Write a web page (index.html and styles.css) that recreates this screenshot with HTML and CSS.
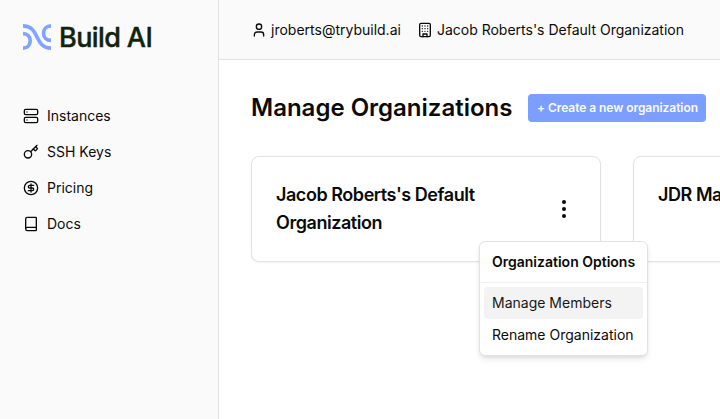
FILE: index.html
```html
<!DOCTYPE html>
<html lang="en">
<head>
<meta charset="utf-8">
<title>Build AI</title>
<link rel="stylesheet" href="styles.css">
</head>
<body>
<div class="app">
  <aside class="sidebar">
    <a class="brand">
      <svg class="brand-mark" viewBox="0 0 28 26" fill="none" stroke="#80a4ff" stroke-width="3.7">
        <path d="M0 1.9C8 1.9 11 6.5 14 13S20 24.1 28 24.1"/>
        <path d="M0 9.6C4.5 9.6 7.2 12.6 7.2 16.7S4.5 24.1 0 24.1"/>
        <path d="M28 1.9C23.5 1.9 20.6 5 20.6 9.2S23.5 16.4 28 16.4"/>
      </svg>
      <span class="brand-name">Build AI</span>
    </a>
    <nav class="nav">
      <a class="nav-item"><svg class="icon" viewBox="0 0 24 24"><rect width="20" height="8" x="2" y="2" rx="2"/><rect width="20" height="8" x="2" y="14" rx="2"/><path d="M6 6h.01M6 18h.01"/></svg>Instances</a>
      <a class="nav-item"><svg class="icon" viewBox="0 0 24 24"><path d="m15.5 7.5 2.3 2.3a1 1 0 0 0 1.4 0l2.1-2.1a1 1 0 0 0 0-1.4L19 4"/><path d="m21 2-9.6 9.6"/><circle cx="7.5" cy="15.5" r="5.5"/></svg>SSH Keys</a>
      <a class="nav-item"><svg class="icon" viewBox="0 0 24 24"><circle cx="12" cy="12" r="10"/><path d="M16 8h-6a2 2 0 1 0 0 4h4a2 2 0 1 1 0 4H8"/><path d="M12 18V6"/></svg>Pricing</a>
      <a class="nav-item"><svg class="icon" viewBox="0 0 24 24"><path d="M4 19.5v-15A2.5 2.5 0 0 1 6.5 2H19a1 1 0 0 1 1 1v18a1 1 0 0 1-1 1H6.5a1 1 0 0 1 0-5H20"/></svg>Docs</a>
    </nav>
  </aside>
  <div class="content">
    <header class="topbar">
      <span class="account"><svg class="icon" viewBox="0 0 24 24"><path d="M19 21v-2a4 4 0 0 0-4-4H9a4 4 0 0 0-4 4v2"/><circle cx="12" cy="7" r="4"/></svg>jroberts@trybuild.ai</span>
      <span class="account"><svg class="icon" viewBox="0 0 24 24"><rect width="16" height="20" x="4" y="2" rx="2"/><path d="M9 22v-4h6v4M8 6h.01M16 6h.01M12 6h.01M12 10h.01M12 14h.01M16 10h.01M16 14h.01M8 10h.01M8 14h.01"/></svg>Jacob Roberts's Default Organization</span>
    </header>
    <main class="main">
      <div class="heading">
        <h1>Manage Organizations</h1>
        <button class="create">+ Create a new organization</button>
      </div>
      <div class="cards">
        <section class="card">
          <h2>Jacob Roberts's Default Organization</h2>
          <div class="options">
            <svg class="dots" viewBox="0 0 24 24"><circle cx="12" cy="5" r="2"/><circle cx="12" cy="12" r="2"/><circle cx="12" cy="19" r="2"/></svg>
            <div class="menu">
              <div class="menu-title">Organization Options</div>
              <div class="separator"></div>
              <div class="menu-item active">Manage Members</div>
              <div class="menu-item">Rename Organization</div>
            </div>
          </div>
        </section>
        <section class="card">
          <h2>JDR Management</h2>
        </section>
      </div>
    </main>
  </div>
</div>
</body>
</html>
```
FILE: styles.css
```css
* { box-sizing: border-box; }
body {
  margin: 0;
  overflow: hidden;
  font: 14px/20px Inter, sans-serif;
  color: #0a0a0a;
  background: #fff;
}
h1, h2 { margin: 0; }
.app { display: flex; height: 419px; }
.sidebar {
  flex: 0 0 219px;
  background: #fafafa;
  border-right: 1px solid #e2e2e2;
}
.brand {
  display: flex;
  align-items: center;
  gap: 8px;
  height: 60px;
  margin-top: 7px;
  padding: 0 0 0 23px;
}
.brand-mark { width: 28px; height: 26px; }
.brand-name {
  padding-top: 2px;
  font-size: 27px;
  font-weight: 500;
  line-height: 32px;
  letter-spacing: -0.6px;
  color: #10240d;
  -webkit-text-stroke: 0.4px #10240d;
}
.nav { padding: 31px 23px 0; }
.nav-item { display: flex; align-items: center; gap: 8px; height: 36px; }
.icon {
  flex: none;
  width: 16px;
  height: 16px;
  fill: none;
  stroke: currentColor;
  stroke-width: 2;
  stroke-linecap: round;
  stroke-linejoin: round;
}
.content { flex: 1; min-width: 0; overflow: hidden; }
.topbar {
  display: flex;
  align-items: center;
  gap: 16px;
  height: 60px;
  padding-left: 32px;
  background: #fafafa;
  border-bottom: 1px solid #e2e2e2;
}
.account { display: flex; align-items: center; gap: 4px; white-space: nowrap; }
.main { padding: 32px 0 0 32px; }
.heading { display: flex; align-items: center; gap: 16px; height: 32px; }
h1 { font-size: 24px; line-height: 32px; font-weight: 600; white-space: nowrap; }
.create {
  width: 178px;
  height: 28px;
  padding: 0 8px;
  border: 0;
  border-radius: 4px;
  background: #7c9fff;
  color: #fafafa;
  font: 600 12px/16px Inter, sans-serif;
  letter-spacing: -0.05px;
  white-space: nowrap;
}
.cards { display: flex; gap: 32px; margin-top: 32px; }
.card {
  display: flex;
  flex: 0 0 350px;
  justify-content: space-between;
  align-items: center;
  height: 106px;
  padding: 24px;
  border: 1px solid #e2e2e2;
  border-radius: 8px;
  background: #fff;
  box-shadow: 0 1px 2px rgba(0, 0, 0, .05);
}
h2 {
  align-self: flex-start;
  width: 230px;
  font-size: 18px;
  line-height: 28px;
  font-weight: 600;
  letter-spacing: -0.45px;
}
.options { position: relative; width: 24px; height: 24px; }
.dots { display: block; width: 24px; height: 24px; fill: #0a0a0a; }
.menu {
  position: absolute;
  top: 44px;
  right: -72px;
  z-index: 2;
  width: 169px;
  padding: 4px;
  border: 1px solid #e2e2e2;
  border-radius: 6px;
  background: #fff;
  box-shadow: 0 4px 6px -1px rgba(0, 0, 0, .1), 0 2px 4px -2px rgba(0, 0, 0, .1);
}
.menu-title, .menu-item { padding: 6px 8px; white-space: nowrap; }
.menu-title { font-weight: 600; }
.separator { height: 1px; margin: 4px -4px; background: #f1f1f1; }
.menu-item { border-radius: 4px; }
.active { background: #f3f3f3; color: #171717; }
```
